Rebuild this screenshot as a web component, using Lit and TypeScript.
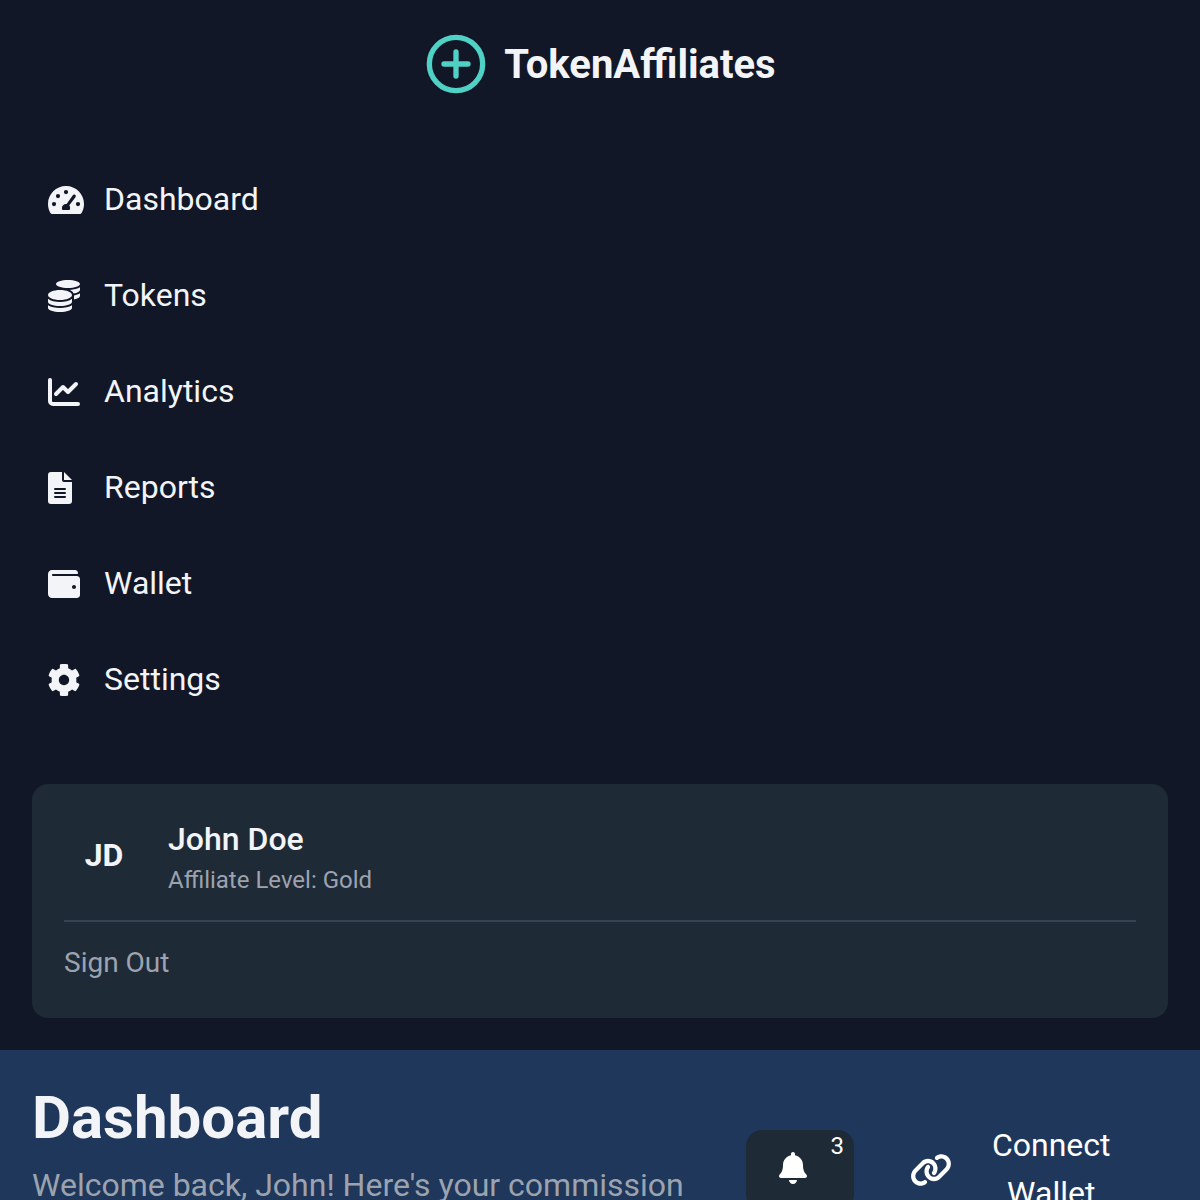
import { LitElement, html, svg, css } from "lit";
import { customElement, property } from "lit/decorators.js";

const icons: Record<string, { w: number; body: unknown }> = {
  gauge: {
    w: 576,
    body: svg`<path fill-rule="evenodd" d="M288 32C129 32 0 161 0 320c0 52.800 14.250 102.260 39.060 144.800 5.610 9.620 16.300 15.200 27.440 15.200h443c11.140 0 21.830-5.580 27.440-15.200C561.750 422.260 576 372.800 576 320 576 161 447 32 288 32zM288 94a34 34 0 1 1 0 68 34 34 0 0 1 0-68zM96 286a34 34 0 1 1 0 68 34 34 0 0 1 0-68zM160 158a34 34 0 1 1 0 68 34 34 0 0 1 0-68zM480 286a34 34 0 1 1 0 68 34 34 0 0 1 0-68zM434 173c11.500 9 14 25 5 37L341 341C349 353 354 368 354 384c0 11.700-3.100 22.600-8.600 32H230.600c-5.500-9.400-8.600-20.300-8.600-32 0-36 29-66 66-66 3.400 0 6.700.3 10 .8L397 179c9-12 25-14 37-6z"/>`,
  },
  coins: {
    w: 512,
    body: svg`<path d="M0 405.300V448c0 35.300 86 64 192 64s192-28.700 192-64v-42.700C342.700 434.400 267.200 448 192 448S41.300 434.400 0 405.300zM320 128c106 0 192-28.700 192-64S426 0 320 0 128 28.700 128 64s86 64 192 64zM0 300.400V352c0 35.300 86 64 192 64s192-28.700 192-64v-51.600c-41.300 34-116.900 51.600-192 51.600S41.300 334.400 0 300.400zm416 11c57.300-11.100 96-31.700 96-55.400v-42.700c-23.200 16.400-57.300 27.600-96 34.500v63.600zM192 160C86 160 0 195.800 0 240s86 80 192 80 192-35.800 192-80-86-80-192-80zm219.300 56.300c60-10.800 100.700-32 100.700-56.300v-42.700c-35.500 25.100-96.500 38.600-160.700 41.800 29.500 14.300 51.200 33.500 60 57.200z"/>`,
  },
  chart: {
    w: 512,
    body: svg`<path d="M32 64v336a48 48 0 0 0 48 48h400M128 288l112-112 80 80 128-128" fill="none" stroke="currentColor" stroke-width="64" stroke-linecap="round" stroke-linejoin="round"/>`,
  },
  file: {
    w: 384,
    body: svg`<path fill-rule="evenodd" d="M48 0H224V128a32 32 0 0 0 32 32H384V464a48 48 0 0 1-48 48H48a48 48 0 0 1-48-48V48A48 48 0 0 1 48 0zM256 0V128H384zM112 256a16 16 0 0 0 0 32H272a16 16 0 0 0 0-32zM112 320a16 16 0 0 0 0 32H272a16 16 0 0 0 0-32zM112 384a16 16 0 0 0 0 32H272a16 16 0 0 0 0-32z"/>`,
  },
  wallet: {
    w: 512,
    body: svg`<path d="M461.200 128H80c-8.840 0-16-7.160-16-16s7.160-16 16-16h384c8.840 0 16-7.160 16-16 0-26.510-21.490-48-48-48H64C28.650 32 0 60.650 0 96v320c0 35.350 28.650 64 64 64h397.200c28.020 0 50.800-21.530 50.800-48V176c0-26.470-22.780-48-50.800-48zM416 336c-17.670 0-32-14.330-32-32s14.330-32 32-32 32 14.330 32 32-14.330 32-32 32z"/>`,
  },
  cog: {
    w: 512,
    body: svg`<path transform="translate(256 256) scale(1.035) translate(-256 -256)" d="M487.400 315.700l-42.600-24.600c4.300-23.200 4.300-47 0-70.200l42.600-24.600c4.900-2.800 7.100-8.600 5.500-14-11.100-35.600-30-67.800-54.700-94.600-3.800-4.100-10-5.100-14.800-2.300L380.800 110c-17.900-15.400-38.500-27.300-60.800-35.100V25.800c0-5.600-3.900-10.500-9.400-11.700-36.700-8.200-74.300-7.800-109.200 0-5.500 1.200-9.400 6.100-9.400 11.700V75c-22.200 7.900-42.800 19.800-60.800 35.100L88.700 85.500c-4.900-2.800-11-1.900-14.800 2.300-24.700 26.700-43.600 58.900-54.700 94.600-1.700 5.400.6 11.200 5.500 14L67.300 221c-4.300 23.200-4.300 47 0 70.200l-42.600 24.600c-4.900 2.800-7.100 8.600-5.500 14 11.100 35.600 30 67.800 54.700 94.600 3.800 4.100 10 5.100 14.800 2.300l42.600-24.600c17.900 15.400 38.500 27.300 60.800 35.100v49.200c0 5.600 3.900 10.500 9.400 11.700 36.700 8.200 74.300 7.800 109.200 0 5.500-1.200 9.400-6.100 9.400-11.700v-49.200c22.200-7.900 42.800-19.800 60.800-35.100l42.600 24.600c4.900 2.800 11 1.900 14.800-2.300 24.700-26.700 43.600-58.900 54.700-94.600 1.500-5.500-.7-11.300-5.600-14.100zM256 336c-44.100 0-80-35.900-80-80s35.900-80 80-80 80 35.900 80 80-35.900 80-80 80z"/>`,
  },
  bell: {
    w: 448,
    body: svg`<path d="M224 512c35.320 0 63.970-28.650 63.970-64H160.030c0 35.350 28.650 64 63.970 64zm215.390-149.710c-19.320-20.760-55.470-51.990-55.470-154.290 0-77.700-54.480-139.900-127.940-155.160V32c0-17.670-14.320-32-31.980-32s-31.980 14.330-31.980 32v20.840C118.560 68.100 64.080 130.300 64.080 208c0 102.300-36.150 133.530-55.470 154.290-6 6.450-8.660 14.160-8.610 21.710.11 16.400 12.980 32 32.100 32h383.800c19.120 0 32-15.600 32.100-32 .05-7.550-2.610-15.270-8.610-21.710z"/>`,
  },
  link: {
    w: 640,
    body: svg`<path transform="translate(320 256) scale(1.055 1.07) translate(-320 -256)" d="M579.800 267.700c56.500-56.500 56.500-148 0-204.500c-50-50-128.800-56.500-186.300-15.400l-1.600 1.100c-14.400 10.300-17.700 30.300-7.400 44.600s30.300 17.700 44.600 7.400l1.600-1.100c32.100-22.900 76-19.300 103.800 8.600c31.500 31.500 31.500 82.500 0 114L422.300 334.800c-31.500 31.500-82.500 31.500-114 0c-27.900-27.900-31.500-71.800-8.600-103.800l1.100-1.600c10.300-14.400 6.900-34.400-7.400-44.600s-34.400-6.900-44.600 7.400l-1.100 1.600C206.500 251.200 213 330 263 380c56.500 56.500 148 56.500 204.500 0L579.800 267.700zM60.200 244.300c-56.500 56.500-56.500 148 0 204.500c50 50 128.800 56.500 186.300 15.400l1.600-1.100c14.400-10.300 17.700-30.300 7.400-44.600s-30.300-17.700-44.600-7.400l-1.600 1.100c-32.100 22.900-76 19.300-103.800-8.600C74 372 74 321 105.500 289.500L217.700 177.200c31.500-31.500 82.500-31.500 114 0c27.900 27.900 31.500 71.800 8.600 103.900l-1.100 1.600c-10.300 14.400-6.900 34.400 7.400 44.600s34.400 6.900 44.600-7.400l1.100-1.600C433.500 260.800 427 182 377 132c-56.500-56.500-148-56.500-204.500 0L60.200 244.300z"/>`,
  },
};

@customElement("ta-icon")
class TaIcon extends LitElement {
  @property() name = "";
  static styles = css`
    :host { display: flex; }
    svg { display: block; height: 32px; fill: currentColor; overflow: visible; }
  `;
  render() {
    const icon = icons[this.name];
    return html`<svg viewBox="0 0 ${icon.w} 512" width=${icon.w / 16}>${icon.body}</svg>`;
  }
}

const links = [
  ["gauge", "Dashboard"],
  ["coins", "Tokens"],
  ["chart", "Analytics"],
  ["file", "Reports"],
  ["wallet", "Wallet"],
  ["cog", "Settings"],
];

@customElement("app-root")
class AppRoot extends LitElement {
  static styles = css`
    :host {
      display: block;
      height: 1200px;
      overflow: hidden;
      background: #111726;
      color: #f3f4f8;
      font-family: Roboto, sans-serif;
      font-size: 32px;
      line-height: 48px;
    }
    * { box-sizing: border-box; }
    .sidebar { padding: 0 32px 32px; }
    .logo {
      display: flex;
      align-items: center;
      justify-content: center;
      gap: 16px;
      height: 128px;
      font-size: 40px;
      font-weight: 700;
    }
    .brand { padding-top: 2px; }
    .nav { display: flex; flex-direction: column; gap: 16px; padding-top: 32px; }
    .item { display: flex; align-items: center; height: 80px; padding: 0 16px; }
    .text { padding-bottom: 2px; }
    .glyph { width: 40px; margin-right: 16px; }
    .card {
      height: 234px;
      margin-top: 64px;
      padding: 32px;
      border-radius: 16px;
      background: #1f2a37;
    }
    .user { display: flex; align-items: center; height: 80px; }
    .avatar { width: 80px; margin-right: 24px; padding-bottom: 2px; text-align: center; font-weight: 700; }
    .name { font-weight: 500; line-height: 46px; padding-bottom: 2px; }
    .level { font-size: 24px; line-height: 32px; color: #9ca3af; }
    .signout {
      margin-top: 24px;
      padding-top: 21px;
      border-top: 2px solid #374151;
      font-size: 28px;
      line-height: 40px;
      color: #9ca3af;
    }
    .header {
      display: flex;
      align-items: center;
      justify-content: space-between;
      height: 240px;
      padding: 0 32px;
      background: #1e375a;
    }
    .title { margin: 0; font-size: 60px; line-height: 72px; font-weight: 700; }
    .sub { margin: 7px 0 1px; width: 666px; line-height: 48px; color: #9ca3af; }
    .actions { display: flex; align-items: center; gap: 24px; color: #fff; }
    .bell {
      position: relative;
      display: flex;
      width: 108px;
      height: 80px;
      padding: 22px 0 0 32.500px;
      border-radius: 16px;
      background: #1f2a37;
    }
    .badge { position: absolute; top: 0; right: 10px; font-size: 24px; line-height: 32px; }
    .connect { display: flex; align-items: center; width: 290px; padding: 0 16px 0 32.500px; }
    .label { flex: 1; padding-bottom: 2px; text-align: center; }
  `;

  render() {
    return html`
      <aside class="sidebar">
        <div class="logo">
          <svg width="64" height="64" viewBox="0 0 24 24" fill="none" stroke="#4fd1c5" stroke-width="2" stroke-linecap="round">
            <circle cx="12" cy="12" r="10" /><path d="M12 7.500v9M7.500 12h9" />
          </svg>
          <span class="brand">TokenAffiliates</span>
        </div>
        <nav class="nav">
          ${links.map(
            ([icon, label]) => html`<div class="item"><ta-icon class="glyph" name=${icon}></ta-icon><span class="text">${label}</span></div>`
          )}
        </nav>
        <section class="card">
          <div class="user">
            <div class="avatar">JD</div>
            <div><div class="name">John Doe</div><div class="level">Affiliate Level: Gold</div></div>
          </div>
          <div class="signout">Sign Out</div>
        </section>
      </aside>
      <header class="header">
        <div>
          <h1 class="title">Dashboard</h1>
          <p class="sub">Welcome back, John! Here's your commission overview.</p>
        </div>
        <div class="actions">
          <div class="bell"><ta-icon name="bell"></ta-icon><span class="badge">3</span></div>
          <div class="connect"><ta-icon name="link"></ta-icon><span class="label">Connect<br />Wallet</span></div>
        </div>
      </header>
    `;
  }
}
